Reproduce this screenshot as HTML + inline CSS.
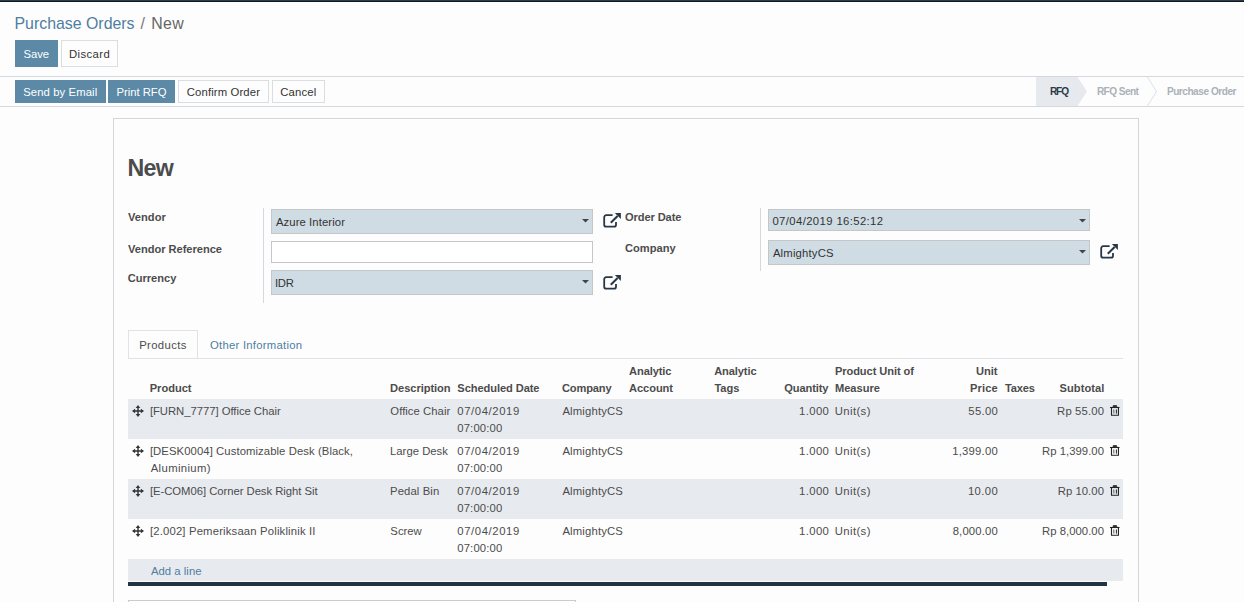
<!DOCTYPE html>
<html><head><meta charset="utf-8"><title>Purchase Orders / New</title>
<style>
html,body{margin:0;padding:0;}
body{width:1244px;height:602px;overflow:hidden;position:relative;background:#fdfdfd;font-family:"Liberation Sans",sans-serif;color:#4c4c4c;}
.t{position:absolute;white-space:nowrap;line-height:1;}
.r{position:absolute;box-sizing:border-box;}
svg.r{display:block;}
</style></head><body>
<div class="r" style="left:0px;top:0px;width:1244px;height:1px;background:#2b3c4c;"></div>
<div class="r" style="left:0px;top:1px;width:1244px;height:1px;background:#0e171f;"></div>
<div class="r" style="left:15px;top:40px;width:43px;height:27px;background:#5b89a6;"></div>
<div class="r" style="left:61px;top:40px;width:57px;height:27px;border:1px solid #d9dee3;"></div>
<div class="r" style="left:0px;top:76px;width:1244px;height:1px;background:#d5d9de;"></div>
<div class="r" style="left:0px;top:106px;width:1244px;height:1px;background:#d5d9de;"></div>
<div class="r" style="left:15px;top:80px;width:91px;height:23px;background:#5b89a6;"></div>
<div class="r" style="left:108px;top:80px;width:67px;height:23px;background:#5b89a6;"></div>
<div class="r" style="left:178px;top:80px;width:91px;height:23px;border:1px solid #d9dee3;"></div>
<div class="r" style="left:272px;top:80px;width:53px;height:23px;border:1px solid #d9dee3;"></div>
<svg class="r" style="left:1030px;top:77px" width="214" height="29"><polygon points="6,0 47.5,0 57,14.5 47.5,29 6,29" fill="#e6e9ee"/><polyline points="117.5,0 126.5,14.5 117.5,29" fill="none" stroke="#dde1e5"/></svg>
<div class="r" style="left:113px;top:118px;width:1026px;height:600px;border:1px solid #d3d7dc;"></div>
<div class="r" style="left:263px;top:208px;width:1px;height:95px;background:#d5d9de;"></div>
<div class="r" style="left:271px;top:209px;width:322px;height:25px;background:#cfdce4;border:1px solid #c4c6c8;"></div>
<div class="r" style="left:271px;top:241px;width:322px;height:22px;background:#fff;border:1px solid #c4c6c8;"></div>
<div class="r" style="left:271px;top:270px;width:322px;height:25px;background:#cfdce4;border:1px solid #c4c6c8;"></div>
<div class="r" style="left:760px;top:208px;width:1px;height:63px;background:#d5d9de;"></div>
<div class="r" style="left:768px;top:209px;width:322px;height:22px;background:#cfdce4;border:1px solid #c4c6c8;"></div>
<div class="r" style="left:768px;top:240px;width:322px;height:25px;background:#cfdce4;border:1px solid #c4c6c8;"></div>
<svg class="r" style="left:582px;top:219px" width="7" height="4"><polygon points="0,0 7,0 3.5,3.5" fill="#444"/></svg>
<svg class="r" style="left:582px;top:280px" width="7" height="4"><polygon points="0,0 7,0 3.5,3.5" fill="#444"/></svg>
<svg class="r" style="left:1079px;top:219px" width="7" height="4"><polygon points="0,0 7,0 3.5,3.5" fill="#444"/></svg>
<svg class="r" style="left:1079px;top:250px" width="7" height="4"><polygon points="0,0 7,0 3.5,3.5" fill="#444"/></svg>
<svg class="r" style="left:603px;top:212px" width="18" height="16" viewBox="0 0 18 16"><path d="M9.6,3.2 H3.2 a2,2 0 0 0 -2,2 V12.7 a2,2 0 0 0 2,2 H11 a2,2 0 0 0 2,-2 V9.9" fill="none" stroke="#283745" stroke-width="1.8"/><path d="M7.8,10.8 L14.6,4" stroke="#283745" stroke-width="2"/><polygon points="11.9,1 17.9,1 17.9,7" fill="#283745"/></svg>
<svg class="r" style="left:603px;top:274px" width="18" height="16" viewBox="0 0 18 16"><path d="M9.6,3.2 H3.2 a2,2 0 0 0 -2,2 V12.7 a2,2 0 0 0 2,2 H11 a2,2 0 0 0 2,-2 V9.9" fill="none" stroke="#283745" stroke-width="1.8"/><path d="M7.8,10.8 L14.6,4" stroke="#283745" stroke-width="2"/><polygon points="11.9,1 17.9,1 17.9,7" fill="#283745"/></svg>
<svg class="r" style="left:1100px;top:243px" width="18" height="16" viewBox="0 0 18 16"><path d="M9.6,3.2 H3.2 a2,2 0 0 0 -2,2 V12.7 a2,2 0 0 0 2,2 H11 a2,2 0 0 0 2,-2 V9.9" fill="none" stroke="#283745" stroke-width="1.8"/><path d="M7.8,10.8 L14.6,4" stroke="#283745" stroke-width="2"/><polygon points="11.9,1 17.9,1 17.9,7" fill="#283745"/></svg>
<div class="r" style="left:128px;top:358px;width:995px;height:1px;background:#dfe3e7;"></div>
<div class="r" style="left:128px;top:330px;width:70px;height:29px;border:1px solid #dfe3e7;"></div>
<div class="r" style="left:128px;top:399px;width:995px;height:40px;background:#e7eaef;"></div>
<svg class="r" style="left:132px;top:404.6px" width="12" height="12" viewBox="0 0 12 12"><path d="M6,1.5 V10.5 M1.5,6 H10.5" stroke="#333" stroke-width="1.4"/><polygon points="6,0 8.3,3.1 3.7,3.1" fill="#333"/><polygon points="6,12 8.3,8.9 3.7,8.9" fill="#333"/><polygon points="0,6 3.1,3.7 3.1,8.3" fill="#333"/><polygon points="12,6 8.9,3.7 8.9,8.3" fill="#333"/></svg>
<svg class="r" style="left:1110px;top:405px" width="10" height="11" viewBox="0 0 10 11"><path d="M0,2.5 H9.5" stroke="#222" stroke-width="1.1"/><path d="M3,2.5 V1.4 Q3,0.3 4,0.3 H5.8 Q6.8,0.3 6.8,1.4 V2.5 Z" fill="#333" stroke="#222" stroke-width="0.6"/><path d="M1.5,2.5 V10.3 H8.45 V2.5" fill="none" stroke="#222" stroke-width="1.1"/><path d="M3.8,4.5 V8.6" stroke="#777" stroke-width="1.2"/><path d="M6.4,4.5 V8.6" stroke="#222" stroke-width="1"/></svg>
<svg class="r" style="left:132px;top:444.6px" width="12" height="12" viewBox="0 0 12 12"><path d="M6,1.5 V10.5 M1.5,6 H10.5" stroke="#333" stroke-width="1.4"/><polygon points="6,0 8.3,3.1 3.7,3.1" fill="#333"/><polygon points="6,12 8.3,8.9 3.7,8.9" fill="#333"/><polygon points="0,6 3.1,3.7 3.1,8.3" fill="#333"/><polygon points="12,6 8.9,3.7 8.9,8.3" fill="#333"/></svg>
<svg class="r" style="left:1110px;top:445px" width="10" height="11" viewBox="0 0 10 11"><path d="M0,2.5 H9.5" stroke="#222" stroke-width="1.1"/><path d="M3,2.5 V1.4 Q3,0.3 4,0.3 H5.8 Q6.8,0.3 6.8,1.4 V2.5 Z" fill="#333" stroke="#222" stroke-width="0.6"/><path d="M1.5,2.5 V10.3 H8.45 V2.5" fill="none" stroke="#222" stroke-width="1.1"/><path d="M3.8,4.5 V8.6" stroke="#777" stroke-width="1.2"/><path d="M6.4,4.5 V8.6" stroke="#222" stroke-width="1"/></svg>
<div class="r" style="left:128px;top:479px;width:995px;height:40px;background:#e7eaef;"></div>
<svg class="r" style="left:132px;top:484.6px" width="12" height="12" viewBox="0 0 12 12"><path d="M6,1.5 V10.5 M1.5,6 H10.5" stroke="#333" stroke-width="1.4"/><polygon points="6,0 8.3,3.1 3.7,3.1" fill="#333"/><polygon points="6,12 8.3,8.9 3.7,8.9" fill="#333"/><polygon points="0,6 3.1,3.7 3.1,8.3" fill="#333"/><polygon points="12,6 8.9,3.7 8.9,8.3" fill="#333"/></svg>
<svg class="r" style="left:1110px;top:485px" width="10" height="11" viewBox="0 0 10 11"><path d="M0,2.5 H9.5" stroke="#222" stroke-width="1.1"/><path d="M3,2.5 V1.4 Q3,0.3 4,0.3 H5.8 Q6.8,0.3 6.8,1.4 V2.5 Z" fill="#333" stroke="#222" stroke-width="0.6"/><path d="M1.5,2.5 V10.3 H8.45 V2.5" fill="none" stroke="#222" stroke-width="1.1"/><path d="M3.8,4.5 V8.6" stroke="#777" stroke-width="1.2"/><path d="M6.4,4.5 V8.6" stroke="#222" stroke-width="1"/></svg>
<svg class="r" style="left:132px;top:524.6px" width="12" height="12" viewBox="0 0 12 12"><path d="M6,1.5 V10.5 M1.5,6 H10.5" stroke="#333" stroke-width="1.4"/><polygon points="6,0 8.3,3.1 3.7,3.1" fill="#333"/><polygon points="6,12 8.3,8.9 3.7,8.9" fill="#333"/><polygon points="0,6 3.1,3.7 3.1,8.3" fill="#333"/><polygon points="12,6 8.9,3.7 8.9,8.3" fill="#333"/></svg>
<svg class="r" style="left:1110px;top:525px" width="10" height="11" viewBox="0 0 10 11"><path d="M0,2.5 H9.5" stroke="#222" stroke-width="1.1"/><path d="M3,2.5 V1.4 Q3,0.3 4,0.3 H5.8 Q6.8,0.3 6.8,1.4 V2.5 Z" fill="#333" stroke="#222" stroke-width="0.6"/><path d="M1.5,2.5 V10.3 H8.45 V2.5" fill="none" stroke="#222" stroke-width="1.1"/><path d="M3.8,4.5 V8.6" stroke="#777" stroke-width="1.2"/><path d="M6.4,4.5 V8.6" stroke="#222" stroke-width="1"/></svg>
<div class="r" style="left:128px;top:559px;width:995px;height:22px;background:#e7eaef;"></div>
<div class="r" style="left:128px;top:582px;width:979px;height:4px;background:#243342;"></div>
<div class="r" style="left:128px;top:600px;width:448px;height:10px;border:1px solid #c8ccd0;"></div>
<div class="t" style="left:14.53px;top:16px;font-size:15.9px;letter-spacing:-0.007px;color:#4f7ea0;">Purchase Orders</div>
<div class="t" style="left:140.6px;top:16px;font-size:15.9px;color:#777;">/</div>
<div class="t" style="left:151.13px;top:16px;font-size:15.9px;letter-spacing:0.386px;color:#666;">New</div>
<div class="t" style="left:23.43px;top:49px;font-size:11.3px;letter-spacing:-0.011px;color:#fff;">Save</div>
<div class="t" style="left:68.9px;top:49px;font-size:11.3px;letter-spacing:0.415px;color:#333;">Discard</div>
<div class="t" style="left:23.13px;top:87px;font-size:11.3px;letter-spacing:0.106px;color:#fff;">Send by Email</div>
<div class="t" style="left:116.6px;top:87px;font-size:11.3px;letter-spacing:-0.04px;color:#fff;">Print RFQ</div>
<div class="t" style="left:186.84px;top:87px;font-size:11.3px;letter-spacing:0.129px;color:#333;">Confirm Order</div>
<div class="t" style="left:280.13px;top:87px;font-size:11.3px;letter-spacing:0.18px;color:#333;">Cancel</div>
<div class="t" style="left:1049.89px;top:87px;font-size:10.1px;font-weight:700;letter-spacing:-1.05px;color:#2b3a47;">RFQ</div>
<div class="t" style="left:1096.89px;top:87px;font-size:10.1px;font-weight:700;letter-spacing:-0.564px;color:#aab1b8;">RFQ Sent</div>
<div class="t" style="left:1166.89px;top:87px;font-size:10.1px;font-weight:700;letter-spacing:-0.472px;color:#aab1b8;">Purchase Order</div>
<div class="t" style="left:127.58px;top:157px;font-size:23.2px;font-weight:700;letter-spacing:-0.784px;">New</div>
<div class="t" style="left:127.99px;top:212px;font-size:11.1px;font-weight:700;letter-spacing:0.041px;">Vendor</div>
<div class="t" style="left:127.99px;top:244px;font-size:11.1px;font-weight:700;letter-spacing:-0.02px;">Vendor Reference</div>
<div class="t" style="left:127.66px;top:273px;font-size:11.1px;font-weight:700;">Currency</div>
<div class="t" style="left:275.9px;top:217px;font-size:11.3px;letter-spacing:0.093px;color:#333;">Azure Interior</div>
<div class="t" style="left:274.88px;top:278px;font-size:11.3px;letter-spacing:-0.227px;color:#333;">IDR</div>
<div class="t" style="left:625.06px;top:212px;font-size:11.1px;font-weight:700;letter-spacing:-0.111px;">Order Date</div>
<div class="t" style="left:625.06px;top:243px;font-size:11.1px;font-weight:700;">Company</div>
<div class="t" style="left:772.45px;top:216px;font-size:11.3px;letter-spacing:0.388px;color:#333;">07/04/2019 16:52:12</div>
<div class="t" style="left:772.9px;top:248px;font-size:11.3px;letter-spacing:0.185px;color:#333;">AlmightyCS</div>
<div class="t" style="left:139.2px;top:340px;font-size:11.3px;letter-spacing:0.36px;">Products</div>
<div class="t" style="left:209.94px;top:340px;font-size:11.3px;letter-spacing:0.264px;color:#4f7ea0;">Other Information</div>
<div class="t" style="left:149.72px;top:383px;font-size:11.1px;font-weight:700;letter-spacing:-0.012px;">Product</div>
<div class="t" style="left:390.12px;top:383px;font-size:11.1px;font-weight:700;letter-spacing:-0.051px;">Description</div>
<div class="t" style="left:457.37px;top:383px;font-size:11.1px;font-weight:700;letter-spacing:-0.083px;">Scheduled Date</div>
<div class="t" style="left:561.96px;top:383px;font-size:11.1px;font-weight:700;letter-spacing:-0.143px;">Company</div>
<div class="t" style="left:629.07px;top:366px;font-size:11.1px;font-weight:700;letter-spacing:-0.102px;">Analytic</div>
<div class="t" style="left:629.07px;top:383px;font-size:11.1px;font-weight:700;letter-spacing:-0.076px;">Account</div>
<div class="t" style="left:714.17px;top:366px;font-size:11.1px;font-weight:700;letter-spacing:-0.102px;">Analytic</div>
<div class="t" style="left:714.39px;top:383px;font-size:11.1px;font-weight:700;">Tags</div>
<div class="t" style="left:784.26px;top:383px;font-size:11.1px;font-weight:700;letter-spacing:-0.116px;">Quantity</div>
<div class="t" style="left:834.92px;top:366px;font-size:11.1px;font-weight:700;letter-spacing:-0.076px;">Product Unit of</div>
<div class="t" style="left:834.92px;top:383px;font-size:11.1px;font-weight:700;">Measure</div>
<div class="t" style="left:975.93px;top:366px;font-size:11.1px;font-weight:700;letter-spacing:-0.019px;">Unit</div>
<div class="t" style="left:969.92px;top:383px;font-size:11.1px;font-weight:700;letter-spacing:0.156px;">Price</div>
<div class="t" style="left:1005.09px;top:383px;font-size:11.1px;font-weight:700;letter-spacing:-0.22px;">Taxes</div>
<div class="t" style="left:1059.57px;top:383px;font-size:11.1px;font-weight:700;letter-spacing:0.044px;">Subtotal</div>
<div class="t" style="left:149.91px;top:406px;font-size:11.3px;letter-spacing:-0.037px;">[FURN_7777] Office Chair</div>
<div class="t" style="left:390.33px;top:406px;font-size:11.3px;letter-spacing:0.041px;">Office Chair</div>
<div class="t" style="left:457.25px;top:406px;font-size:11.3px;letter-spacing:0.6px;">07/04/2019</div>
<div class="t" style="left:457.25px;top:423px;font-size:11.3px;letter-spacing:0.15px;">07:00:00</div>
<div class="t" style="left:562.4px;top:406px;font-size:11.3px;letter-spacing:0.163px;">AlmightyCS</div>
<div class="t" style="left:799.1px;top:406px;font-size:11.3px;letter-spacing:0.376px;">1.000</div>
<div class="t" style="left:834.8px;top:406px;font-size:11.3px;letter-spacing:0.393px;">Unit(s)</div>
<div class="t" style="left:968.35px;top:406px;font-size:11.3px;letter-spacing:0.288px;">55.00</div>
<div class="t" style="left:1057.1px;top:406px;font-size:11.3px;letter-spacing:0.14px;">Rp 55.00</div>
<div class="t" style="left:149.91px;top:446px;font-size:11.3px;letter-spacing:0.079px;">[DESK0004] Customizable Desk (Black,</div>
<div class="t" style="left:150.7px;top:463px;font-size:11.3px;letter-spacing:0.375px;">Aluminium)</div>
<div class="t" style="left:390.0px;top:446px;font-size:11.3px;letter-spacing:0.018px;">Large Desk</div>
<div class="t" style="left:457.25px;top:446px;font-size:11.3px;letter-spacing:0.6px;">07/04/2019</div>
<div class="t" style="left:457.25px;top:463px;font-size:11.3px;letter-spacing:0.15px;">07:00:00</div>
<div class="t" style="left:562.4px;top:446px;font-size:11.3px;letter-spacing:0.163px;">AlmightyCS</div>
<div class="t" style="left:799.1px;top:446px;font-size:11.3px;letter-spacing:0.376px;">1.000</div>
<div class="t" style="left:834.8px;top:446px;font-size:11.3px;letter-spacing:0.393px;">Unit(s)</div>
<div class="t" style="left:952.2px;top:446px;font-size:11.3px;letter-spacing:0.228px;">1,399.00</div>
<div class="t" style="left:1042.0px;top:446px;font-size:11.3px;letter-spacing:0.037px;">Rp 1,399.00</div>
<div class="t" style="left:149.91px;top:486px;font-size:11.3px;letter-spacing:-0.041px;">[E-COM06] Corner Desk Right Sit</div>
<div class="t" style="left:390.0px;top:486px;font-size:11.3px;letter-spacing:0.102px;">Pedal Bin</div>
<div class="t" style="left:457.25px;top:486px;font-size:11.3px;letter-spacing:0.6px;">07/04/2019</div>
<div class="t" style="left:457.25px;top:503px;font-size:11.3px;letter-spacing:0.15px;">07:00:00</div>
<div class="t" style="left:562.4px;top:486px;font-size:11.3px;letter-spacing:0.163px;">AlmightyCS</div>
<div class="t" style="left:799.1px;top:486px;font-size:11.3px;letter-spacing:0.376px;">1.000</div>
<div class="t" style="left:834.8px;top:486px;font-size:11.3px;letter-spacing:0.393px;">Unit(s)</div>
<div class="t" style="left:967.9px;top:486px;font-size:11.3px;letter-spacing:0.401px;">10.00</div>
<div class="t" style="left:1057.7px;top:486px;font-size:11.3px;letter-spacing:0.054px;">Rp 10.00</div>
<div class="t" style="left:149.91px;top:526px;font-size:11.3px;letter-spacing:0.171px;">[2.002] Pemeriksaan Poliklinik II</div>
<div class="t" style="left:390.33px;top:526px;font-size:11.3px;letter-spacing:0.013px;">Screw</div>
<div class="t" style="left:457.25px;top:526px;font-size:11.3px;letter-spacing:0.6px;">07/04/2019</div>
<div class="t" style="left:457.25px;top:543px;font-size:11.3px;letter-spacing:0.15px;">07:00:00</div>
<div class="t" style="left:562.4px;top:526px;font-size:11.3px;letter-spacing:0.163px;">AlmightyCS</div>
<div class="t" style="left:799.1px;top:526px;font-size:11.3px;letter-spacing:0.376px;">1.000</div>
<div class="t" style="left:834.8px;top:526px;font-size:11.3px;letter-spacing:0.393px;">Unit(s)</div>
<div class="t" style="left:952.65px;top:526px;font-size:11.3px;letter-spacing:0.164px;">8,000.00</div>
<div class="t" style="left:1042.0px;top:526px;font-size:11.3px;letter-spacing:0.037px;">Rp 8,000.00</div>
<div class="t" style="left:150.9px;top:566px;font-size:11.3px;letter-spacing:0.042px;color:#4f7ea0;">Add a line</div>
</body></html>
